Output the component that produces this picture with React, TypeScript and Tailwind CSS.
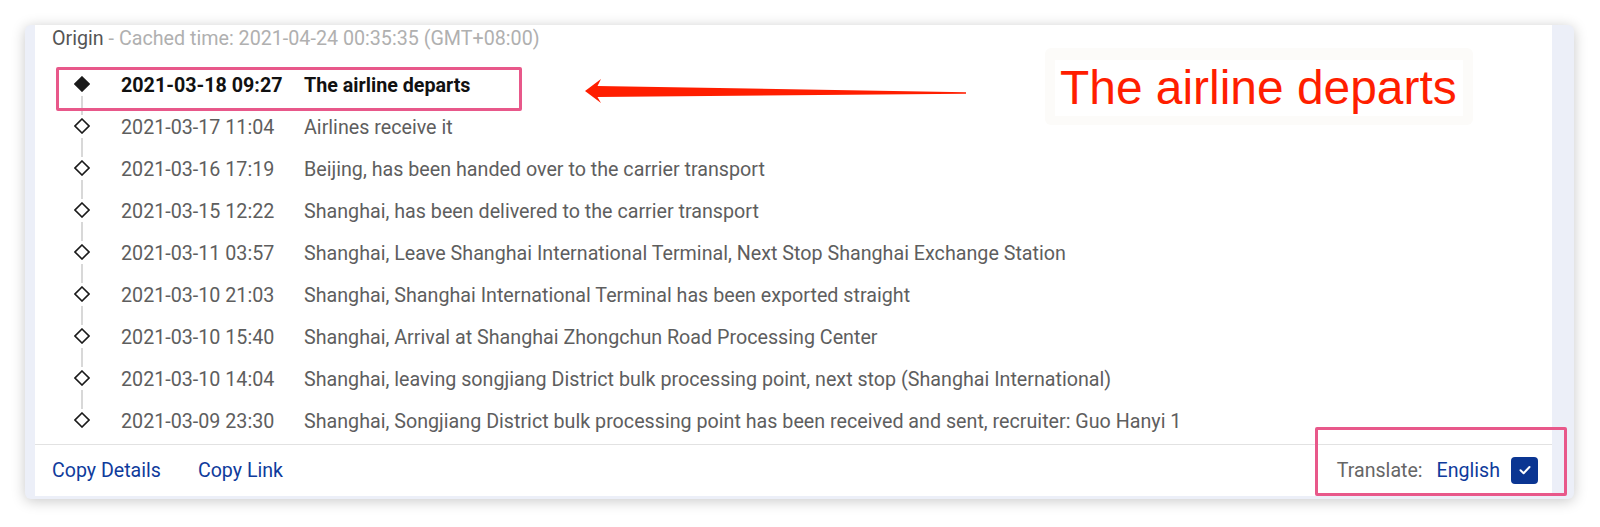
import React from "react";

const rows: [string, string][] = [
  ["2021-03-18 09:27", "The airline departs"],
  ["2021-03-17 11:04", "Airlines receive it"],
  ["2021-03-16 17:19", "Beijing, has been handed over to the carrier transport"],
  ["2021-03-15 12:22", "Shanghai, has been delivered to the carrier transport"],
  ["2021-03-11 03:57", "Shanghai, Leave Shanghai International Terminal, Next Stop Shanghai Exchange Station"],
  ["2021-03-10 21:03", "Shanghai, Shanghai International Terminal has been exported straight"],
  ["2021-03-10 15:40", "Shanghai, Arrival at Shanghai Zhongchun Road Processing Center"],
  ["2021-03-10 14:04", "Shanghai, leaving songjiang District bulk processing point, next stop (Shanghai International)"],
  ["2021-03-09 23:30", "Shanghai, Songjiang District bulk processing point has been received and sent, recruiter: Guo Hanyi 1"],
];

function Diamond({ filled }: { filled: boolean }) {
  return (
    <svg width="16" height="16" viewBox="0 0 16 16" className="shrink-0">
      <polygon
        points="8,1 15,8 8,15 1,8"
        fill={filled ? "#1a1a1a" : "#ffffff"}
        stroke="#1a1a1a"
        strokeWidth="1.6"
        strokeLinejoin="miter"
      />
    </svg>
  );
}

export default function App() {
  return (
    <div
      className="relative w-[1600px] h-[527px] bg-white overflow-hidden"
      style={{ fontFamily: "Roboto, 'Liberation Sans', sans-serif" }}
    >
      <div className="ml-[25px] mt-[25px] w-[1549px] h-[474px] bg-[#eceff8] rounded-[6px] shadow-[0_2px_14px_rgba(0,0,0,0.22)] pl-[10px] pr-[22px] pb-[3px]">
        <div className="h-full bg-white flex flex-col">
          <div className="h-[28px] leading-[28px] pl-[17px] text-[19.7px] whitespace-nowrap">
            <span className="text-[#555555]">Origin</span>
            <span className="text-[#b0b0b0]"> - Cached time: 2021-04-24 00:35:35 (GMT+08:00)</span>
          </div>
          <div className="mt-[12px] pl-[32px] flex flex-col">
            {rows.map(([d, t], i) => (
              <div key={i} className="h-[42px] flex items-start">
                <div className="w-[30px] h-[42px] flex flex-col items-center pt-[11px]">
                  <Diamond filled={i === 0} />
                  {i < rows.length - 1 && (
                    <div className="mt-[4px] w-[2px] h-[19px] bg-[#d8d8d8] shrink-0" />
                  )}
                </div>
                <div
                  className={
                    "ml-[24px] w-[183px] h-[42px] leading-[42px] text-[19.7px] whitespace-nowrap " +
                    (i === 0 ? "font-bold text-[#111111]" : "text-[#5e5e5e]")
                  }
                >
                  {d}
                </div>
                <div
                  className={
                    "h-[42px] leading-[42px] text-[19.7px] whitespace-nowrap " +
                    (i === 0 ? "font-bold text-[#111111]" : "text-[#5e5e5e]")
                  }
                >
                  {t}
                </div>
              </div>
            ))}
          </div>
          <div className="mt-auto h-[52px] border-t border-[#e2e2e2] flex items-center pl-[17px] pr-[14px] text-[19.6px]">
            <span className="text-[#0f3b9c]">Copy Details</span>
            <span className="ml-[37px] text-[#0f3b9c]">Copy Link</span>
            <div className="ml-auto flex items-center">
              <span className="text-[#666666]">Translate:</span>
              <span className="ml-[14px] text-[#0f3b9c]">English</span>
              <div className="ml-[11px] w-[27px] h-[27px] rounded-[4px] bg-[#0a3592] flex items-center justify-center">
                <svg width="16" height="16" viewBox="0 0 16 16">
                  <path d="M3.5 8.3 L6.6 11.2 L12.5 5" fill="none" stroke="white" strokeWidth="2" strokeLinecap="round" strokeLinejoin="round" />
                </svg>
              </div>
            </div>
          </div>
        </div>
      </div>

      {/* annotations */}
      <div className="absolute left-[56px] top-[67px] w-[466px] h-[44px] border-[3px] border-[#e8588a] rounded-[2px]" />
      <div className="absolute left-[1315px] top-[427px] w-[252px] h-[69px] border-[3px] border-[#e8588a] rounded-[2px]" />
      <svg className="absolute left-[580px] top-[75px]" width="392" height="34" viewBox="580 75 392 34">
        <polygon
          points="585,91 601,79 597.5,86 966,92.3 966,93.7 597.5,97 601,103"
          fill="#ff1e00"
        />
      </svg>
      <div className="absolute left-[1045px] top-[48px] w-[428px] h-[77px] rounded-[6px] bg-[#fcfbf9] p-[10px] pt-[12px] pb-[9px]">
        <div
          className="h-full bg-white flex items-center pl-[5px] text-[47.9px] text-[#ff1e00] leading-none whitespace-nowrap"
          style={{ fontFamily: "'Liberation Sans', Arial, sans-serif" }}
        >
          The airline departs
        </div>
      </div>
    </div>
  );
}
